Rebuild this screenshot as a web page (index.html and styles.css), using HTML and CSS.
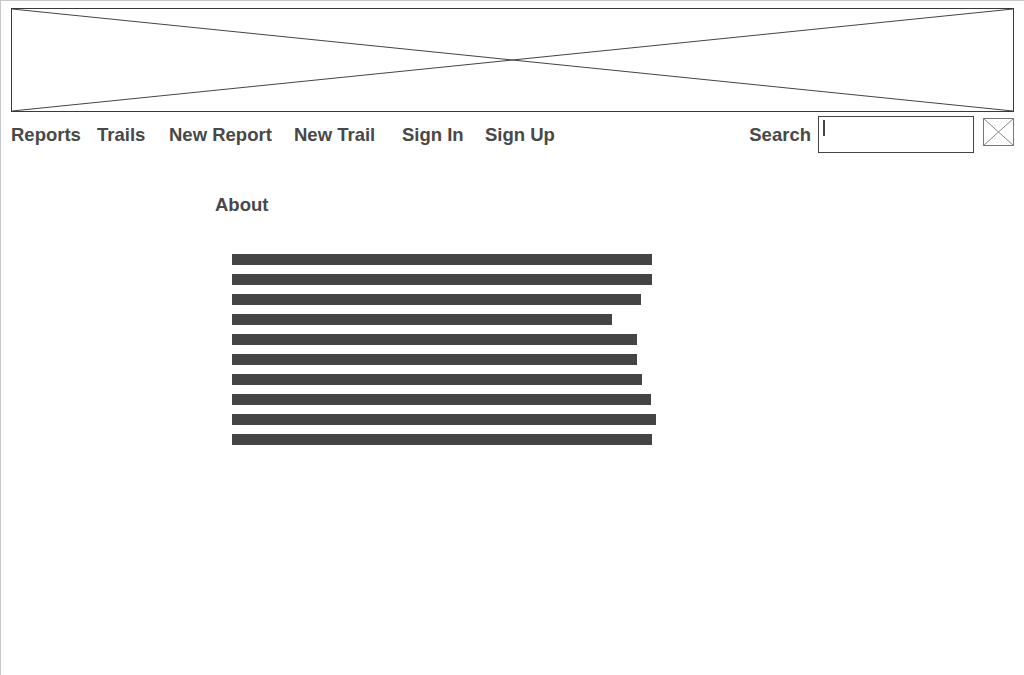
FILE: index.html
```html
<!DOCTYPE html>
<html>
<head>
<meta charset="utf-8">
<link rel="stylesheet" href="styles.css">
</head>
<body>
<div class="frame">
  <div class="banner">
    <svg class="banner-x" viewBox="0 0 1001 102" preserveAspectRatio="none">
      <line x1="0" y1="0" x2="1001" y2="102"/>
      <line x1="0" y1="102" x2="1001" y2="0"/>
    </svg>
  </div>
  <div class="nav">
    <div class="links">
      <span class="link">Reports</span>
      <span class="link">Trails</span>
      <span class="link">New Report</span>
      <span class="link">New Trail</span>
      <span class="link">Sign In</span>
      <span class="link">Sign Up</span>
    </div>
    <div class="search">
      <span class="search-label">Search</span>
      <div class="search-input"><span class="caret"></span></div>
      <svg class="search-icon" width="31" height="28" viewBox="0 0 31 28">
        <rect x="0.5" y="0.5" width="30" height="27"/>
        <line x1="0.5" y1="0.5" x2="30.5" y2="27.5"/>
        <line x1="0.5" y1="27.5" x2="30.5" y2="0.5"/>
      </svg>
    </div>
  </div>
  <h2 class="title">About</h2>
  <div class="lines">
    <div class="bar" style="width:420px"></div>
    <div class="bar" style="width:420px"></div>
    <div class="bar" style="width:409px"></div>
    <div class="bar" style="width:380px"></div>
    <div class="bar" style="width:405px"></div>
    <div class="bar" style="width:405px"></div>
    <div class="bar" style="width:410px"></div>
    <div class="bar" style="width:419px"></div>
    <div class="bar" style="width:424px"></div>
    <div class="bar" style="width:420px"></div>
  </div>
</div>
</body>
</html>
```

FILE: styles.css
```css
html, body {
  margin: 0;
  padding: 0;
  background: #fff;
}

body {
  font-family: "Liberation Sans", Arial, sans-serif;
  color: #484848;
}

.frame {
  box-sizing: border-box;
  width: 1024px;
  height: 675px;
  border-top: 1px solid #c8c8c8;
  border-left: 1px solid #c8c8c8;
  padding: 7px 10px 0 10px;
}

.banner {
  box-sizing: border-box;
  width: 1003px;
  height: 104px;
  border: 1px solid #3a3a3a;
}

.banner-x {
  display: block;
  width: 100%;
  height: 100%;
}

.banner-x line {
  stroke: #444;
  stroke-width: 1;
  vector-effect: non-scaling-stroke;
}

.nav {
  display: flex;
  justify-content: space-between;
  align-items: flex-start;
  margin-top: 4px;
}

.links {
  display: flex;
}

.link,
.search-label {
  font-size: 18.5px;
  font-weight: bold;
  line-height: 22px;
  padding-top: 8px;
  white-space: nowrap;
}

.link:nth-child(1) { width: 86px; }
.link:nth-child(2) { width: 72px; }
.link:nth-child(3) { width: 125px; }
.link:nth-child(4) { width: 108px; }
.link:nth-child(5) { width: 83px; }

.search {
  display: flex;
  align-items: flex-start;
}

.search-label {
  margin-right: 7px;
}

.search-input {
  box-sizing: border-box;
  width: 156px;
  height: 37px;
  border: 1px solid #444;
  padding: 3px 4px;
}

.caret {
  display: block;
  width: 2px;
  height: 16px;
  background: #444;
}

.search-icon {
  display: block;
  margin-left: 9px;
  margin-top: 2px;
}

.search-icon rect {
  fill: #fff;
  stroke: #777;
}

.search-icon line {
  stroke: #888;
  stroke-width: 1;
}

.title {
  margin: 41px 0 0 204px;
  font-size: 18.5px;
  font-weight: bold;
  line-height: 22px;
}

.lines {
  display: flex;
  flex-direction: column;
  gap: 9px;
  margin: 38px 0 0 221px;
}

.bar {
  height: 11px;
  background: #444;
}
```
